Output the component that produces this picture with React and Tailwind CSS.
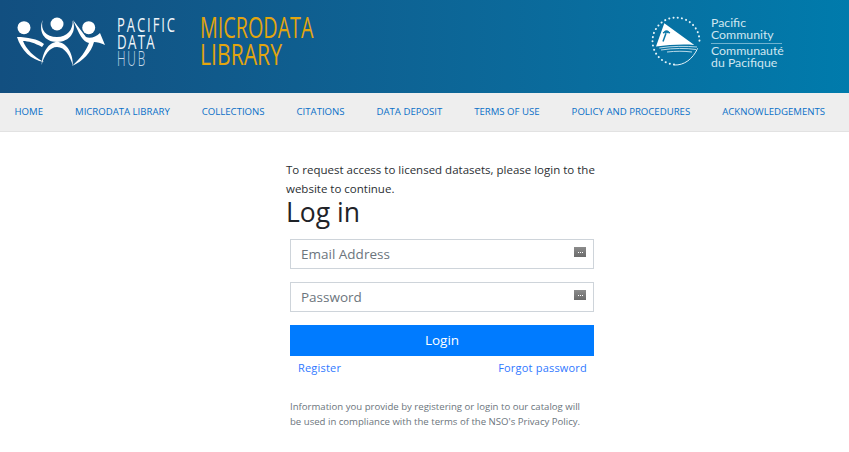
const navItems = [
  "Home",
  "Microdata Library",
  "Collections",
  "Citations",
  "Data Deposit",
  "Terms of use",
  "Policy and Procedures",
  "Acknowledgements",
];

const PdhLogo = () => (
  <svg width="90" height="52" viewBox="0 0 90 52" className="shrink-0">
    <g fill="#fff">
      <circle cx="7" cy="11.700" r="6.500" />
      <circle cx="40" cy="8" r="6.500" />
      <circle cx="71.700" cy="11.700" r="6.500" />
      {/* middle figure arms */}
      <path d="M25.700 4 C23 14 29 21 40 21 C50 21 56 14 55.700 4.500 C60 15 53 26 40 26 C27 26 21 15 25.700 4 Z" />
      {/* left leaf */}
      <path d="M0 21 C10 21 21 23 27 28 L25 31 C18 27 11 25 6 25 C9 33 17 41 27 46 C14 44 4 34 0 21 Z" />
      {/* body */}
      <path d="M24.700 49 C25 36 32 26 40 26 C49 26 56 36 56 50 C53 40 48 31 40 31 C33 31 27 39 24.700 49 Z" />
      {/* right arm and leaf */}
      <path d="M56 4 L69 21 C73 23 79 21 83 17 L88 29 C84 27 80 26 77 26 C74 37 66 45 55 50 C63 43 69 35 72 27 C66 26 62 18 56 4 Z" />
    </g>
  </svg>
);

const PdhWordmark = () => (
  <svg width="64" height="53" viewBox="0 0 64 53" className="shrink-0 overflow-visible font-['Open_Sans',sans-serif]">
    <text x="1" y="17" fontSize="20" letterSpacing="3" fill="#f0f5f9" textLength="60" lengthAdjust="spacingAndGlyphs">PACIFIC</text>
    <text x="1" y="34" fontSize="20" letterSpacing="2" fill="#f0f5f9" textLength="39" lengthAdjust="spacingAndGlyphs">DATA</text>
    <text x="1" y="51" fontSize="20" fontWeight="300" letterSpacing="3" fill="#c6dbe9" textLength="30" lengthAdjust="spacingAndGlyphs">HUB</text>
  </svg>
);

const LibraryWordmark = () => (
  <svg width="116" height="53" viewBox="0 0 116 53" className="shrink-0 overflow-visible font-['Open_Sans',sans-serif]">
    <text x="0" y="23" fontSize="29.500" fill="#e2a50e" textLength="113.500" lengthAdjust="spacingAndGlyphs">MICRODATA</text>
    <text x="0" y="50" fontSize="29.500" fill="#e2a50e" textLength="82" lengthAdjust="spacingAndGlyphs">LIBRARY</text>
  </svg>
);

const SpcLogo = () => (
  <svg width="52" height="52" viewBox="0 0 52 52" className="shrink-0">
    {/* ring of dots, open at the lower right */}
    <path
      d="M24 49.500 A23.500 23.500 0 1 1 49.500 26"
      fill="none"
      stroke="#e6f3f8"
      strokeWidth="2"
      strokeLinecap="round"
      strokeDasharray="0.100 4.200"
    />
    <path d="M24.300 50 C34 50.500 43 44 47.600 33.300" fill="none" stroke="#e6f3f8" strokeWidth="1" />
    {/* sail */}
    <path d="M14.300 8.300 L44.300 30 C32 29 18 30 6 31.600 Z" fill="#fff" />
    {/* palm on the sail */}
    <path d="M13 26.600 L16 18.300" stroke="#0b78a8" strokeWidth="1.500" fill="none" />
    <path d="M13 18 C15 15 18 15 20 18 C18 17.500 15 17.500 13 18 Z" fill="#0b78a8" stroke="#0b78a8" />
    {/* waves */}
    <path d="M9.300 33 C22 31 36 31 47 32 M11 35 C24 33 36 33 46 34.500 M17 37 C26 36 34 36 42 37" stroke="#cfe6f0" strokeWidth="0.900" fill="none" />
  </svg>
);

const KeyIcon = () => (
  <span className="absolute right-[8px] top-[8px] flex h-[10px] w-[12px] items-center justify-center gap-px bg-gradient-to-b from-[#8c8c8c] to-[#6b6b6b]">
    <span className="h-px w-px bg-white" />
    <span className="h-px w-px bg-white" />
    <span className="h-px w-px bg-white" />
  </span>
);

const Field = ({ placeholder, type }) => (
  <div className="relative">
    <input
      type={type}
      placeholder={placeholder}
      className="block h-[30px] w-full border border-[#ced4da] bg-white px-[10px] text-[13.500px] text-[#495057] placeholder:text-[#6c757d]"
    />
    <KeyIcon />
  </div>
);

export default function App() {
  return (
    <div className="min-h-[452px] bg-white font-['Open_Sans',sans-serif] text-[#212529]">
      <header className="flex h-[93px] items-start justify-between bg-gradient-to-r from-[#124f80] to-[#007bac] pt-[15px]">
        <div className="flex items-start">
          <div className="ml-[17px] mt-[1px]">
            <PdhLogo />
          </div>
          <div className="ml-[9px]">
            <PdhWordmark />
          </div>
          <div className="ml-[20px]">
            <LibraryWordmark />
          </div>
        </div>
        <div className="mr-[67px] flex items-start">
          <SpcLogo />
          <div className="ml-[9px] mt-[2px] w-[71px] font-['Lato',sans-serif] text-[12.300px] leading-[12px] text-[#cfe6f0]">
            <div>Pacific</div>
            <div className="border-b border-[#6fb3d0] pb-[2px]">Community</div>
            <div className="pt-[1px]">Communauté</div>
            <div>du Pacifique</div>
          </div>
        </div>
      </header>

      <nav className="flex h-[39px] items-center gap-[32px] border-b border-[#e2e2e2] bg-[#eeeeee] px-[14.500px]">
        {navItems.map((item) => (
          <a key={item} href="#" className="whitespace-nowrap text-[9.600px] uppercase text-[#0a70c8]">
            {item}
          </a>
        ))}
      </nav>

      <main className="ml-[286px] w-[312px] pt-[28px]">
        <p className="text-[11.500px] leading-[19px] text-[#2b2f33]">
          To request access to licensed datasets, please login to the website to continue.
        </p>
        <h1 className="text-[26.500px] font-medium leading-[29px] text-[#1f2328]">Log in</h1>
        <form className="ml-[4px] mt-[12px] w-[304px]">
          <Field placeholder="Email Address" type="text" />
          <div className="mt-[13px]">
            <Field placeholder="Password" type="password" />
          </div>
          <button type="button" className="mt-[13px] block h-[31px] w-full bg-[#007bff] text-[13.500px] font-medium text-white">
            Login
          </button>
          <div className="mt-[4px] flex justify-between pl-[8px] pr-[7px] text-[11px] leading-[15px] tracking-[0.2px] text-[#2f78ff]">
            <a href="#">Register</a>
            <a href="#">Forgot password</a>
          </div>
          <p className="mt-[24px] w-[296px] text-[9.600px] leading-[15px] text-[#6c757d]">
            Information you provide by registering or login to our catalog will be used in compliance with the terms of the NSO's Privacy Policy.
          </p>
        </form>
      </main>
    </div>
  );
}
